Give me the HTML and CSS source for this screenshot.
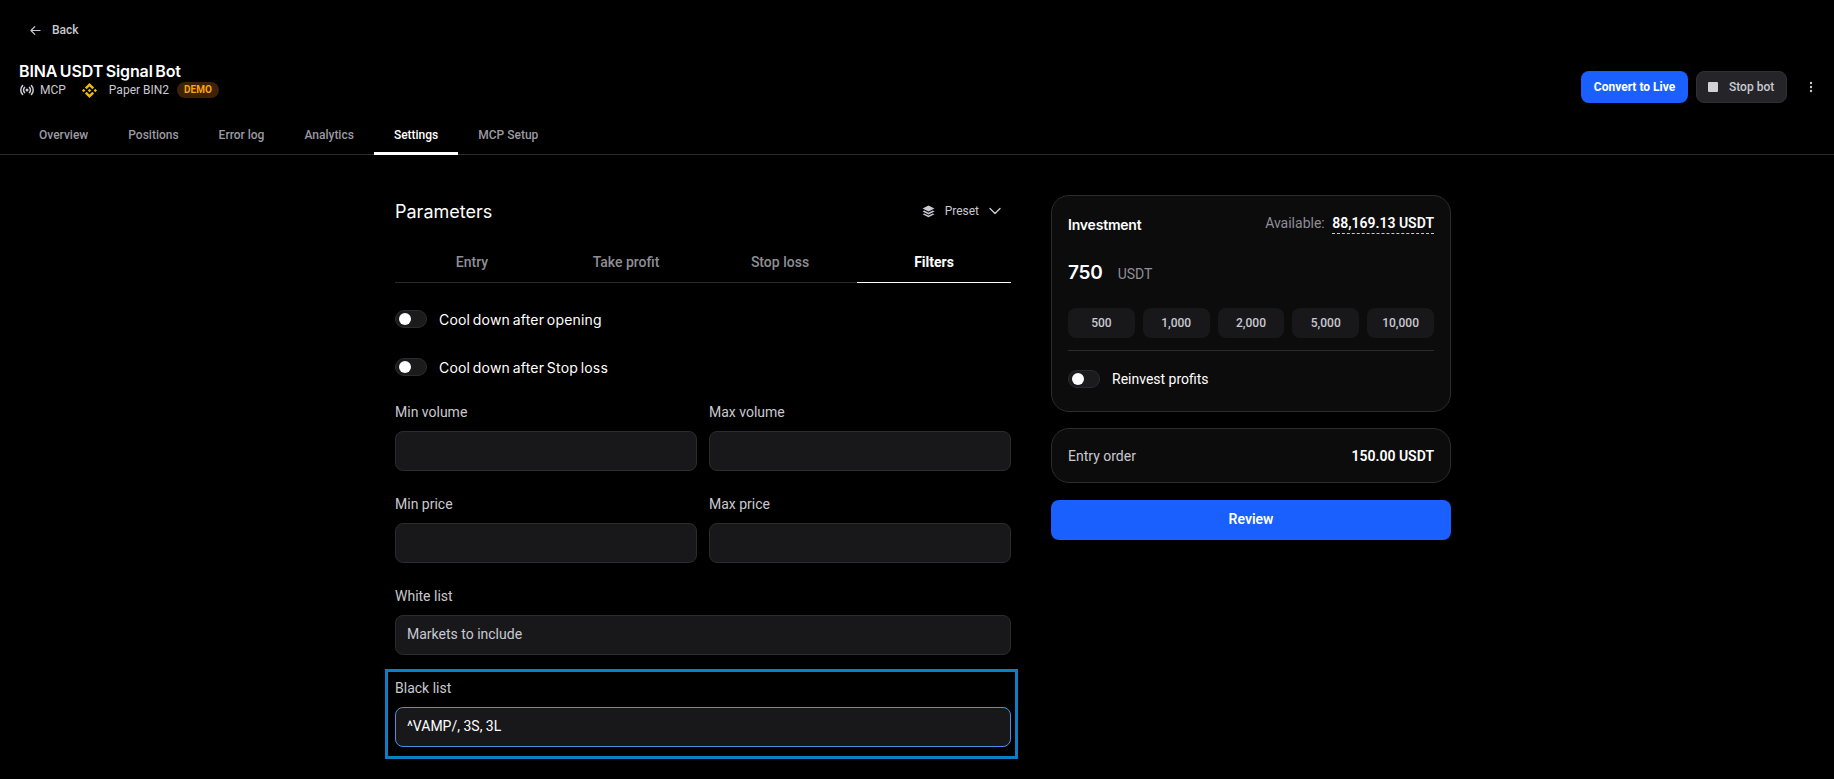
FILE: index.html
```html
<!DOCTYPE html>
<html lang="en">
<head>
  <meta charset="UTF-8">
  <meta name="viewport" content="width=device-width, initial-scale=1.0">
  <title>BINA USDT Signal Bot</title>
  <link rel="stylesheet" href="styles.css">
</head>
<body>

<header class="top">
  <a class="back">
    <svg class="back-icon" viewBox="0 0 12 12" fill="none" stroke="currentColor" stroke-width="1.3" stroke-linecap="round" stroke-linejoin="round"><path d="M11 6H1M5.2 1.8L1 6l4.2 4.2"/></svg>
    Back
  </a>

  <div class="bot-row">
    <div class="bot-info">
      <h1 class="bot-title">BINA USDT Signal Bot</h1>
      <div class="bot-meta">
        <svg class="mcp-icon" viewBox="0 0 14 14" fill="none" stroke="currentColor" stroke-width="1.5" stroke-linecap="round">
          <circle cx="7" cy="7" r="1.5" fill="currentColor" stroke="none"/>
          <path d="M4.6 4.4a3.6 3.6 0 0 0 0 5.2M9.4 4.4a3.6 3.6 0 0 1 0 5.2M2.6 2.6a6.2 6.2 0 0 0 0 8.8M11.4 2.6a6.2 6.2 0 0 1 0 8.8"/>
        </svg>
        <span>MCP</span>
        <svg class="binance-icon" viewBox="0 0 24 24" fill="#f0b90b"><path d="M16.624 13.9202l2.7175 2.7154-7.353 7.353-7.353-7.352 2.7175-2.7164 4.6355 4.6595 4.6356-4.6595zm4.6366-4.6366L24 12l-2.7154 2.7164L18.5682 12l2.6924-2.7164zm-9.272.001l2.7163 2.6914-2.7164 2.7174v-.001L9.2721 12l2.7164-2.7154zm-9.2722-.001L5.4088 12l-2.6914 2.6924L0 12l2.7164-2.7164zM11.9885.0115l7.353 7.329-2.7174 2.7154-4.6356-4.6356-4.6355 4.6595-2.7174-2.7154 7.353-7.353z"/></svg>
        <span>Paper BIN2</span>
        <span class="demo-badge">DEMO</span>
      </div>
    </div>
    <div class="bot-actions">
      <button class="btn-live">Convert to Live</button>
      <button class="btn-stop"><i class="stop-square"></i>Stop bot</button>
      <svg class="more-icon" viewBox="0 0 4 12" fill="currentColor"><circle cx="2" cy="2" r="1.2"/><circle cx="2" cy="6" r="1.2"/><circle cx="2" cy="10" r="1.2"/></svg>
    </div>
  </div>

  <nav class="page-tabs">
    <a class="page-tab">Overview</a>
    <a class="page-tab">Positions</a>
    <a class="page-tab">Error log</a>
    <a class="page-tab">Analytics</a>
    <a class="page-tab active">Settings</a>
    <a class="page-tab">MCP Setup</a>
  </nav>
</header>

<main class="content">
  <section class="params">
    <div class="params-head">
      <h2 class="params-title">Parameters</h2>
      <div class="preset">
        <svg class="preset-icon" viewBox="0 0 14 14" fill="currentColor"><path d="M7 .6l6.4 3.2L7 7 .6 3.8z"/><path d="M2.4 6L7 8.3 11.6 6l1.8.9L7 10.1.6 6.9z"/><path d="M2.4 9.1L7 11.4l4.6-2.3 1.8.9L7 13.2.6 10z"/></svg>
        <span>Preset</span>
        <svg class="chevron" viewBox="0 0 12 8" fill="none" stroke="currentColor" stroke-width="1.4" stroke-linecap="round" stroke-linejoin="round"><path d="M1 1.5l5 5 5-5"/></svg>
      </div>
    </div>

    <div class="param-tabs">
      <a class="param-tab">Entry</a>
      <a class="param-tab">Take profit</a>
      <a class="param-tab">Stop loss</a>
      <a class="param-tab active">Filters</a>
    </div>

    <div class="toggle-row">
      <span class="toggle"></span>
      <span class="toggle-label">Cool down after opening</span>
    </div>
    <div class="toggle-row">
      <span class="toggle"></span>
      <span class="toggle-label">Cool down after Stop loss</span>
    </div>

    <div class="field-grid">
      <div class="field">
        <label>Min volume</label>
        <div class="input"></div>
      </div>
      <div class="field">
        <label>Max volume</label>
        <div class="input"></div>
      </div>
      <div class="field">
        <label>Min price</label>
        <div class="input"></div>
      </div>
      <div class="field">
        <label>Max price</label>
        <div class="input"></div>
      </div>
      <div class="field wide">
        <label>White list</label>
        <div class="input placeholder">Markets to include</div>
      </div>
      <div class="field wide marked">
        <label>Black list</label>
        <div class="input focused">^VAMP/, 3S, 3L</div>
      </div>
    </div>
  </section>

  <aside class="side">
    <div class="card invest">
      <div class="invest-head">
        <span class="invest-title">Investment</span>
        <span class="available">Available: <b>88,169.13 USDT</b></span>
      </div>
      <div class="amount"><strong>750</strong><span>USDT</span></div>
      <div class="chips">
        <button class="chip">500</button>
        <button class="chip">1,000</button>
        <button class="chip">2,000</button>
        <button class="chip">5,000</button>
        <button class="chip">10,000</button>
      </div>
      <div class="reinvest">
        <span class="toggle"></span>
        <span>Reinvest profits</span>
      </div>
    </div>

    <div class="card entry-order">
      <span>Entry order</span>
      <b>150.00 USDT</b>
    </div>

    <button class="btn-review">Review</button>
  </aside>
</main>

</body>
</html>
```

FILE: styles.css
```css
* {
  box-sizing: border-box;
}
body {
  margin: 0;
  background-color: #000;
  color: #fff;
  font-family: Roboto, "Liberation Sans", sans-serif;
  font-size: 14px;
}
h1, h2 {
  margin: 0;
}
button {
  font-family: inherit;
  border: none;
  cursor: pointer;
}

/* header */
.top {
  height: 155px;
  padding-top: 20px;
  border-bottom: 1px solid #2c2c30;
}
.back {
  display: flex;
  align-items: center;
  gap: 11px;
  height: 20px;
  margin-left: 30px;
  font-size: 12px;
  font-weight: 500;
  color: #c9c9d1;
}
.back-icon {
  width: 11px;
  height: 11px;
}
.bot-row {
  display: flex;
  justify-content: space-between;
  align-items: flex-start;
  height: 64px;
  margin-top: 21px;
  padding: 0 19px;
}
.bot-title {
  font-family: Inter, sans-serif;
  font-size: 16px;
  font-weight: 600;
  line-height: 20px;
  letter-spacing: -0.1px;
  word-spacing: -1.5px;
}
.bot-meta {
  display: flex;
  align-items: center;
  height: 18px;
  font-size: 12px;
  color: #c9c9d1;
}
.mcp-icon {
  width: 14px;
  height: 14px;
  margin: 0 6px 0 1px;
}
.binance-icon {
  width: 15px;
  height: 15px;
  margin: 0 12px 0 16px;
}
.demo-badge {
  margin-left: 8px;
  padding: 0 7px;
  height: 16px;
  line-height: 16px;
  border-radius: 8px;
  background-color: #3d2205;
  color: #f6a609;
  font-size: 10px;
  font-weight: 700;
}
.bot-actions {
  display: flex;
  align-items: center;
  margin: 10px 2px 0 0;
}
.btn-live {
  width: 107px;
  height: 32px;
  background-color: #1a5fff;
  color: #fff;
  border-radius: 8px;
  font-size: 12px;
  font-weight: 700;
}
.btn-stop {
  display: flex;
  align-items: center;
  width: 91px;
  height: 32px;
  margin-left: 8px;
  padding-left: 11px;
  background-color: #252529;
  border: 1px solid #303034;
  border-radius: 8px;
  color: #c9c9d1;
  font-size: 12px;
  font-weight: 500;
}
.stop-square {
  width: 10px;
  height: 10px;
  margin-right: 11px;
  border-radius: 1px;
  background-color: #d2d2d6;
}
.more-icon {
  width: 4px;
  height: 12px;
  margin-left: 22px;
  color: #c9c9d1;
}
.page-tabs {
  display: flex;
  margin-left: 19px;
  height: 30px;
}
.page-tab {
  display: flex;
  align-items: center;
  height: 30px;
  padding: 0 20px 11px;
  font-size: 12px;
  font-weight: 500;
  color: #9a9aa3;
}
.page-tab.active {
  color: #fff;
  border-bottom: 3px solid #fff;
  padding-bottom: 8px;
}

/* main layout */
.content {
  display: flex;
  gap: 40px;
  padding: 0 383px 20px 395px;
}
.params {
  width: 616px;
  flex: none;
}
.params-head {
  display: flex;
  justify-content: space-between;
  align-items: center;
  height: 24px;
  margin-top: 44px;
}
.params-title {
  font-family: Inter, sans-serif;
  font-size: 18px;
  font-weight: 400;
  letter-spacing: 0;
}
.preset {
  display: flex;
  align-items: center;
  padding-right: 10px;
  font-size: 12px;
  color: #c9c9d1;
}
.preset-icon {
  width: 13px;
  height: 13px;
  margin-right: 10px;
}
.chevron {
  width: 12px;
  height: 8px;
  margin-left: 10px;
}
.param-tabs {
  display: grid;
  grid-template-columns: repeat(4, 1fr);
  height: 40px;
  margin-top: 20px;
  border-bottom: 1px solid #2c2c30;
}
.param-tab {
  display: flex;
  justify-content: center;
  align-items: center;
  height: 40px;
  padding-bottom: 2px;
  font-size: 14px;
  font-weight: 500;
  color: #8e8e96;
}
.param-tab.active {
  color: #fff;
  font-weight: 700;
  padding-bottom: 1px;
  border-bottom: 1px solid #fff;
}
.toggle-row {
  display: flex;
  align-items: center;
  gap: 12px;
  height: 18px;
  margin-top: 30px;
}
.param-tabs + .toggle-row {
  margin-top: 27px;
}
.toggle {
  position: relative;
  display: block;
  flex: none;
  width: 32px;
  height: 18px;
  border-radius: 9px;
  background-color: #1b1b1e;
  border: 1px solid #2c2c30;
}
.toggle::after {
  content: "";
  position: absolute;
  top: 2px;
  left: 3px;
  width: 12px;
  height: 12px;
  border-radius: 50%;
  background-color: #fff;
}
.toggle-label {
  font-family: Inter, sans-serif;
  font-size: 14px;
  font-weight: 400;
  letter-spacing: 0.2px;
  word-spacing: -1.5px;
}
.field-grid {
  display: grid;
  grid-template-columns: 1fr 1fr;
  column-gap: 12px;
  row-gap: 23px;
  margin-top: 26px;
}
.field.wide {
  grid-column: span 2;
}
.field label {
  display: block;
  height: 20px;
  line-height: 20px;
  margin-bottom: 9px;
  color: #c9c9d1;
}
.input {
  height: 40px;
  padding: 0 11px;
  line-height: 36px;
  background-color: #18181b;
  border: 1px solid #2c2c30;
  border-radius: 8px;
}
.input.placeholder {
  color: #c9c9d1;
}
.input.focused {
  border-color: #4a90e8;
  color: #fff;
}
.field.marked {
  position: relative;
}
/* annotation box drawn over the black list field */
.field.marked::after {
  content: "";
  position: absolute;
  inset: -9px -7px -12px -10px;
  border: 3px solid #0a7fc4;
  pointer-events: none;
}

/* right column */
.side {
  width: 400px;
  flex: none;
  margin-top: 40px;
}
.card {
  background-color: #0c0c0d;
  border: 1px solid #2c2c30;
  border-radius: 18px;
}
.invest {
  height: 217px;
  padding: 0 16px;
}
.invest-head {
  display: flex;
  justify-content: space-between;
  align-items: flex-start;
  padding-top: 17px;
  height: 50px;
}
.invest-title {
  font-family: Inter, sans-serif;
  font-size: 14px;
  font-weight: 600;
  line-height: 24px;
  letter-spacing: -0.2px;
}
.available {
  color: #8e8e96;
  line-height: 20px;
}
.available b {
  margin-left: 4px;
  padding-bottom: 2px;
  font-weight: 600;
  color: #fff;
  border-bottom: 1px dashed #c9c9d1;
}
.amount {
  display: flex;
  align-items: baseline;
  gap: 15px;
  height: 28px;
  margin-top: 15px;
}
.amount strong {
  font-family: Inter, sans-serif;
  font-size: 19px;
  font-weight: 600;
  letter-spacing: -0.2px;
}
.amount span {
  color: #8e8e96;
}
.chips {
  display: grid;
  grid-template-columns: repeat(5, 1fr);
  gap: 8px;
  margin-top: 19px;
  padding-bottom: 12px;
  border-bottom: 1px solid #2c2c30;
}
.chip {
  height: 30px;
  background-color: #18181b;
  border-radius: 8px;
  color: #c9c9d1;
  font-size: 12px;
  font-weight: 500;
}
.reinvest {
  display: flex;
  align-items: center;
  gap: 12px;
  margin-top: 19px;
}
.entry-order {
  display: flex;
  justify-content: space-between;
  align-items: center;
  height: 55px;
  margin-top: 16px;
  padding: 0 16px;
  color: #c9c9d1;
}
.entry-order b {
  font-weight: 600;
  color: #fff;
}
.btn-review {
  display: block;
  width: 100%;
  height: 40px;
  margin-top: 17px;
  padding-bottom: 3px;
  background-color: #1a5fff;
  color: #fff;
  border-radius: 8px;
  font-size: 14px;
  font-weight: 600;
}
```
